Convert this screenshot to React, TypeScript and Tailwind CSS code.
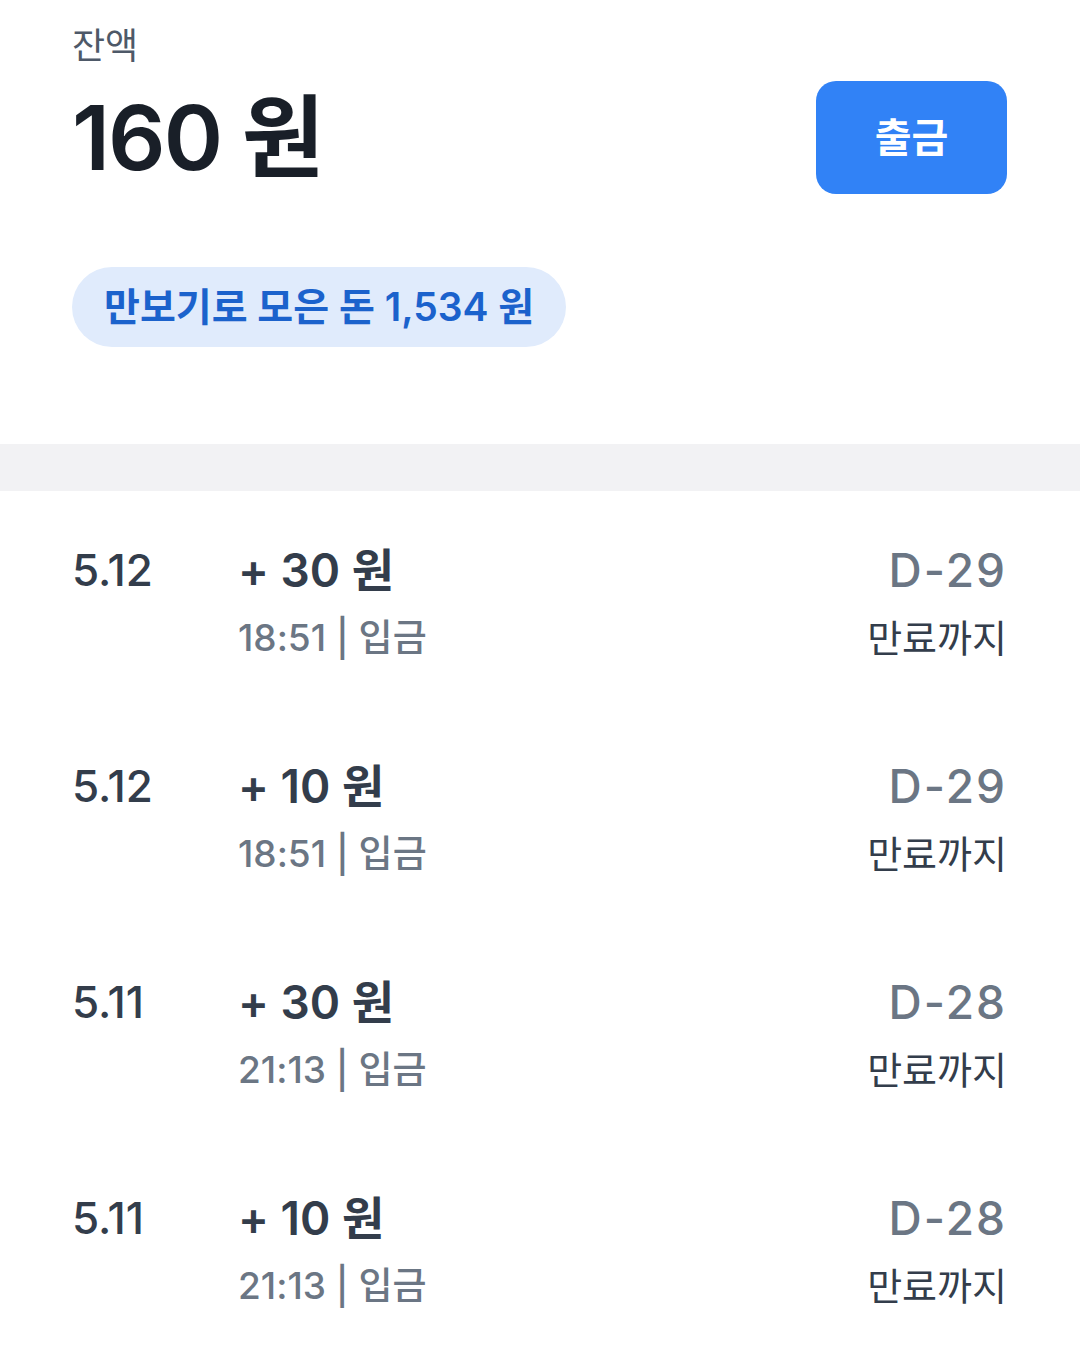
import React from "react";

const font = { fontFamily: 'Inter, "Noto Sans CJK KR", sans-serif' };

const rows = [
  { date: "5.12", amount: "30", time: "18:51", d: "D-29" },
  { date: "5.12", amount: "10", time: "18:51", d: "D-29" },
  { date: "5.11", amount: "30", time: "21:13", d: "D-28" },
  { date: "5.11", amount: "10", time: "21:13", d: "D-28" },
];

export default function App() {
  return (
    <div className="w-[1080px] h-[1368px] bg-white overflow-hidden" style={font}>
      <div className="flex items-start justify-between pl-[72px] pr-[73px] pt-[26px]">
        <div className="flex flex-col">
          <div className="text-[36px] leading-[40px] text-[#4e5968]">잔액</div>
          <div className="mt-[22px] text-[90px] leading-[100px] font-semibold text-[#191f28] tracking-[-2px]">
            160 원
          </div>
        </div>
        <button className="mt-[55px] w-[191px] h-[113px] rounded-[20px] bg-[#3182f6] text-white text-[40px] font-semibold">
          출금
        </button>
      </div>
      <div className="pl-[72px] mt-[73px]">
        <div className="inline-flex items-center h-[80px] px-[32px] rounded-[40px] bg-[#e0ebfc] text-[#1b62cc] text-[39px] font-semibold">
          만보기로 모은 돈 1,534 원
        </div>
      </div>
      <div className="mt-[97px] h-[47px] bg-[#f2f2f4]" />
      <div className="flex flex-col">
        {rows.map((r, i) => (
          <div key={i} className="flex pl-[72px] pr-[73px] pt-[53px] pb-[47px]">
            <div className="w-[166px] text-[44px] leading-[52px] font-medium text-[#333d4b]">{r.date}</div>
            <div className="flex flex-col flex-1">
              <div className="text-[46px] leading-[52px] font-semibold text-[#333d4b]">+ {r.amount} 원</div>
              <div className="mt-[20px] text-[37px] leading-[44px] font-medium text-[#6b7684]">
                {r.time} | 입금
              </div>
            </div>
            <div className="flex flex-col items-end">
              <div className="text-[46px] leading-[52px] font-medium text-[#6b7684] tracking-[2px]">{r.d}</div>
              <div className="mt-[20px] text-[38px] leading-[44px] text-[#333d4b]">만료까지</div>
            </div>
          </div>
        ))}
      </div>
    </div>
  );
}
